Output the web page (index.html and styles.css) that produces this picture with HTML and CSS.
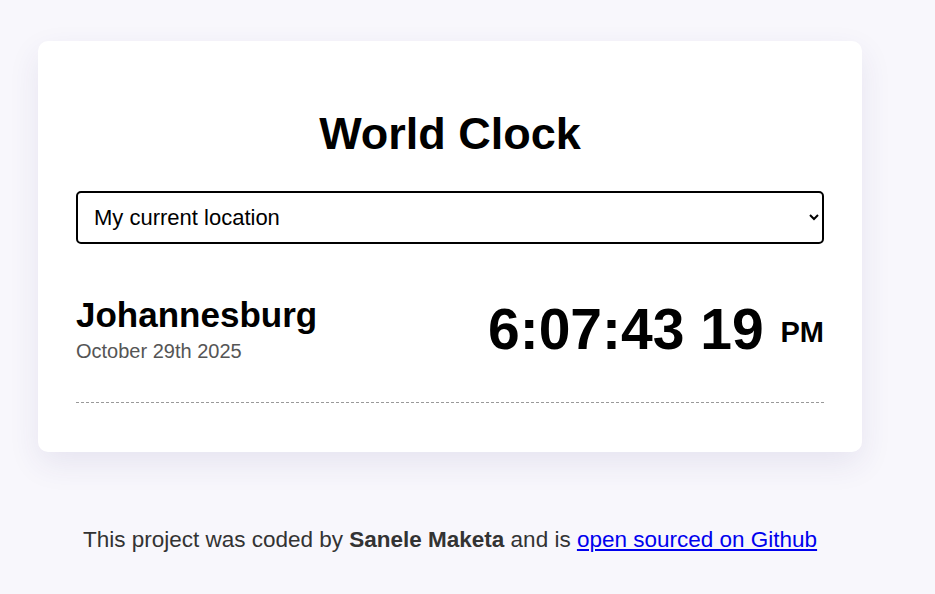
FILE: index.html
```html
<!DOCTYPE html>
<html lang="en">
<head>
<meta charset="utf-8">
<title>World Clock</title>
<link rel="stylesheet" href="styles.css">
</head>
<body>
<div class="container">
  <div class="card">
    <h1 class="title">World Clock</h1>
    <select class="city-select">
      <option>My current location</option>
      <option>Tokyo</option>
      <option>Paris</option>
      <option>Sydney</option>
    </select>
    <div class="city-row">
      <div class="city-info">
        <h2 class="city-name">Johannesburg</h2>
        <div class="city-date">October 29th 2025</div>
      </div>
      <div class="city-time">6:07:43 19 <small class="ampm">PM</small></div>
    </div>
  </div>
  <footer class="footer">
    This project was coded by <strong>Sanele Maketa</strong> and is <a href="#">open sourced on Github</a>
  </footer>
</div>
</body>
</html>
```
FILE: styles.css
```css
html, body {
  margin: 0;
  padding: 0;
}
body {
  background: #f8f7fc;
  font-family: "Liberation Sans", Arial, sans-serif;
  color: #000;
}
.container {
  width: 824px;
  margin-left: 38px;
  padding-top: 41px;
}
.card {
  background: #fff;
  border-radius: 10px;
  padding: 38px 38px 49px;
  box-shadow: 0 12px 32px rgba(50, 40, 120, 0.09);
}
.title {
  margin: 29px 0 0;
  font-size: 45px;
  line-height: 52px;
  font-weight: 700;
  text-align: center;
}
.city-select {
  display: block;
  box-sizing: border-box;
  width: 100%;
  height: 53px;
  margin-top: 31px;
  padding: 0 12px;
  border: 2px solid #000;
  border-radius: 5px;
  background: #fff;
  color: #000;
  font-family: "Liberation Sans", Arial, sans-serif;
  font-size: 22px;
}
.city-row {
  display: flex;
  justify-content: space-between;
  align-items: flex-start;
  padding: 51px 0 39px;
  border-bottom: 1px dashed #999;
}
.city-name {
  margin: 0;
  font-size: 35px;
  line-height: 40px;
  font-weight: 700;
}
.city-date {
  margin-top: 5px;
  font-size: 20px;
  line-height: 23px;
  color: #555;
}
.city-time {
  margin-top: 1px;
  height: 66px;
  font-size: 57px;
  line-height: 66px;
  font-weight: 700;
  white-space: nowrap;
}
.ampm {
  font-size: 29px;
  line-height: 0;
  vertical-align: 7px;
  margin-left: 1px;
}
.footer {
  margin-top: 75px;
  text-align: center;
  font-size: 22.5px;
  line-height: 25px;
  color: #333;
}
.footer a {
  color: #0000ee;
}
```
